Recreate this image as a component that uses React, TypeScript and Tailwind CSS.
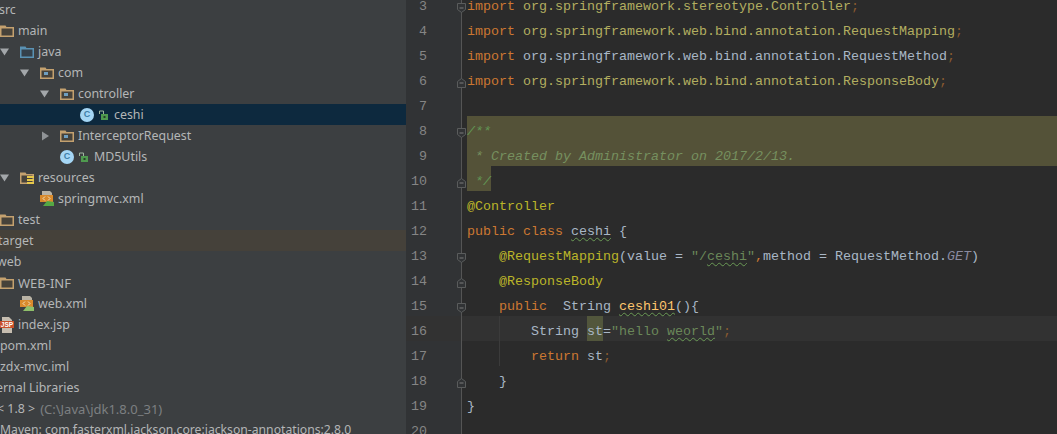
const Arrow = ({ open }: { open?: boolean }) => (
  <span className="flex h-full w-[20px] shrink-0 items-center">
    <svg width="10" height="10" viewBox="0 0 10 10" className={open ? "ml-0" : "ml-[1px]"}>
      {open ? <path d="M0 1.5h9L4.5 8.5z" fill="#a3a7aa" /> : <path d="M1 .5v9L8 5z" fill="#8f9396" />}
    </svg>
  </span>
);

const Folder = ({ kind = "plain" }: { kind?: "plain" | "source" | "package" | "resources" }) => {
  const edge = kind === "source" ? "#5a92b4" : "#c4a16f";
  return (
    <svg width="14" height="14" viewBox="0 0 14 14" className="shrink-0">
      <path d="M0 1.5h5.5l1 1.5H14v10H0z" fill={edge} />
      <rect x="1.5" y="4.5" width="11" height="7" fill={kind === "source" ? "#35404a" : "#46423a"} />
      {kind === "package" && <rect x="4" y="6" width="4" height="3" fill="#6f9fc0" />}
      {kind === "resources" && (
        <g fill="#e6c84a">
          <rect x="7" y="5" width="7" height="2" />
          <rect x="7" y="8" width="7" height="2" />
          <rect x="7" y="11" width="7" height="2" />
        </g>
      )}
    </svg>
  );
};

const ClassIcon = () => (
  <span className="flex h-[14px] w-[14px] shrink-0 items-center justify-center rounded-full bg-[#a5d6f5] font-['Liberation_Sans',sans-serif] text-[9px] font-bold leading-none text-[#3f7fa8]">
    C
  </span>
);

const Lock = () => (
  <svg width="10" height="12" viewBox="0 0 10 12" className="ml-[4px] shrink-0">
    <path d="M1.5 5V2h4v3" fill="none" stroke="#9fb5a0" strokeWidth="1" />
    <rect x="3" y="5" width="7" height="6" fill="#4f9a4f" />
    <rect x="5.5" y="7" width="2" height="2" fill="#27402a" />
  </svg>
);

const XmlIcon = ({ green }: { green?: boolean }) => (
  <svg width="14" height="15" viewBox="0 0 14 15" className="shrink-0">
    <path d="M2 0h8l2 2v8H2z" fill="#b9b3a5" />
    <rect x="0" y="4" width="13" height="7" fill="#d98a2c" />
    <path d="M3 7.5l2-2M3 7.5l2 2M10 7.5l-2-2M10 7.5l-2 2" stroke="#f4e2bd" strokeWidth="1" />
    <path d="M3 15l4-5 7 1v4z" fill={green ? "#55a845" : "#8fbf6a"} />
  </svg>
);

const JspIcon = () => (
  <svg width="14" height="16" viewBox="0 0 14 16" className="shrink-0">
    <path d="M2 0h7l3 3v13H2z" fill="#c6bdb0" />
    <rect x="0" y="4" width="14" height="7" fill="#c8502a" />
    <text x="7" y="10" textAnchor="middle" fontSize="6.5" fontWeight="700" fill="#fff" fontFamily="Liberation Sans, sans-serif">JSP</text>
  </svg>
);

const Row = ({ className, children }: { className: string; children: React.ReactNode }) => (
  <div className={`flex h-[21px] shrink-0 items-center whitespace-nowrap ${className}`}>{children}</div>
);

const Label = ({ children }: { children: React.ReactNode }) => <span className="ml-[4px] pt-[2px]">{children}</span>;

const Tree = () => (
  <div className="-mt-px flex w-[406px] shrink-0 flex-col overflow-hidden bg-[#3c3f41] font-['Noto_Sans',sans-serif] text-[12.4px] text-[#b4b6b7]">
    <Row className="-ml-[1px] pt-[2px]">src</Row>
    <Row className="pl-0"><Folder /><Label>main</Label></Row>
    <Row className="pl-0"><Arrow open /><Folder kind="source" /><Label>java</Label></Row>
    <Row className="pl-[20px]"><Arrow open /><Folder kind="package" /><Label>com</Label></Row>
    <Row className="pl-[40px]"><Arrow open /><Folder kind="package" /><Label>controller</Label></Row>
    <Row className="bg-[#0d293e] pl-[80px]"><ClassIcon /><Lock /><span className="ml-[6px] pt-[2px]">ceshi</span></Row>
    <Row className="pl-[40px]"><Arrow /><Folder kind="package" /><Label>InterceptorRequest</Label></Row>
    <Row className="pl-[60px]"><ClassIcon /><Lock /><span className="ml-[6px] pt-[2px]">MD5Utils</span></Row>
    <Row className="pl-0"><Arrow open /><Folder kind="resources" /><Label>resources</Label></Row>
    <Row className="pl-[40px]"><XmlIcon green /><Label>springmvc.xml</Label></Row>
    <Row className="pl-0"><Folder /><Label>test</Label></Row>
    <Row className="-ml-[2px] bg-[#45413a] pt-[2px]">target</Row>
    <Row className="-ml-[3px] pt-[2px]">web</Row>
    <Row className="pl-0 text-[13px]"><Folder /><Label>WEB-INF</Label></Row>
    <Row className="pl-[20px]"><XmlIcon /><Label>web.xml</Label></Row>
    <Row className="pl-0"><JspIcon /><Label>index.jsp</Label></Row>
    <Row className="pt-[2px]">pom.xml</Row>
    <Row className="pt-[2px]">zdx-mvc.iml</Row>
    <Row className="-ml-[22px] pt-[2px]">External Libraries</Row>
    <Row className="-ml-[3px] pt-[2px]">
      &lt; 1.8 &gt;<span className="ml-[5px] text-[13px] text-[#7d8082]">(C:\Java\jdk1.8.0_31)</span>
    </Row>
    <Row className="pt-[2px] text-[12.2px]">Maven: com.fasterxml.jackson.core:jackson-annotations:2.8.0</Row>
  </div>
);

const Fold = ({ end }: { end?: boolean }) => (
  <svg width="9" height="10" viewBox="0 0 9 10" className="absolute right-[-5px] top-[12px]">
    <path
      d={end ? "M.5 3.5L4.5.5l4 3v6h-8z" : "M.5.5h8v6l-4 3-4-3z"}
      fill="#313335"
      stroke="#5a5c5c"
    />
    <path d="M2.5 5h4" stroke="#7c7c7c" />
  </svg>
);

const Line = ({
  n,
  fold,
  active,
  guide,
  children,
}: {
  n: number;
  fold?: "open" | "end";
  active?: boolean;
  guide?: boolean;
  children?: React.ReactNode;
}) => (
  <div className={`flex h-[25px] shrink-0 whitespace-pre leading-[32px] ${active ? "bg-[#323232]" : ""}`}>
    <div
      className={`relative w-[56px] shrink-0 border-r border-[#555555] pr-[34px] text-right text-[#858585] ${
        active ? "" : "bg-[#313335]"
      }`}
    >
      {n}
      {fold && <Fold end={fold === "end"} />}
    </div>
    <div className="relative min-w-0 flex-1 pl-[5px]">
      {guide && <span className="absolute bottom-0 left-[37px] top-0 w-px bg-[#3b3b3b]" />}
      {children}
    </div>
  </div>
);

const Kw = ({ children }: { children: React.ReactNode }) => <span className="text-[#cc7832]">{children}</span>;
const Pkg = ({ children }: { children: React.ReactNode }) => <span className="text-[#b3ae60]">{children}</span>;
const Anno = ({ children }: { children: React.ReactNode }) => <span className="text-[#bbb529]">{children}</span>;
const Semi = () => <span className="text-[#8a5a30]">;</span>;
const Typo = ({ className, children }: { className: string; children: React.ReactNode }) => (
  <span className={`underline decoration-[#6a9a55] decoration-wavy decoration-1 underline-offset-2 ${className}`}>{children}</span>
);

const Editor = () => (
  <div className="-mt-[9px] flex min-w-0 flex-1 flex-col overflow-hidden bg-[#2b2b2b] font-['Liberation_Mono',monospace] text-[13.33px] text-[#a9b7c6]">
    <Line n={3} fold="open"><Kw>import</Kw> <Pkg>org.springframework.stereotype.Controller</Pkg><Semi /></Line>
    <Line n={4}><Kw>import</Kw> <Pkg>org.springframework.web.bind.annotation.RequestMapping</Pkg><Semi /></Line>
    <Line n={5}><Kw>import</Kw> org.springframework.web.bind.annotation.RequestMethod<Semi /></Line>
    <Line n={6} fold="end"><Kw>import</Kw> <Pkg>org.springframework.web.bind.annotation.ResponseBody</Pkg><Semi /></Line>
    <Line n={7} />
    <Line n={8} fold="open"><div className="h-full bg-[#545238] italic text-[#629755]">/**</div></Line>
    <Line n={9}><div className="h-full bg-[#545238] italic text-[#76905f]"> * Created by Administrator on 2017/2/13.</div></Line>
    <Line n={10} fold="end"><div className="h-full w-[24px] bg-[#545238] italic text-[#629755]"> */</div></Line>
    <Line n={11}><Anno>@Controller</Anno></Line>
    <Line n={12}><Kw>public class</Kw> <Typo className="text-[#a9b7c6]">ceshi</Typo> {"{"}</Line>
    <Line n={13} fold="open">
      {"    "}<Anno>@RequestMapping</Anno>(value = <span className="text-[#6a8759]">"/<Typo className="">ceshi</Typo>"</span><Kw>,</Kw>method = RequestMethod.<span className="italic text-[#8a8aa0]">GET</span>)
    </Line>
    <Line n={14} fold="end">{"    "}<Anno>@ResponseBody</Anno></Line>
    <Line n={15} fold="open">{"    "}<Kw>public</Kw>  String <Typo className="text-[#ffc66d]">ceshi01</Typo>(){"{"}</Line>
    <Line n={16} active guide>
      {"        "}String <span className="inline-block h-[25px] bg-[#52563c]">st</span>=<span className="text-[#6a8759]">"hello <Typo className="">weorld</Typo>"</span><Semi />
    </Line>
    <Line n={17} guide>{"        "}<Kw>return</Kw> st<Semi /></Line>
    <Line n={18} fold="end">{"    "}{"}"}</Line>
    <Line n={19}>{"}"}</Line>
    <Line n={20} />
  </div>
);

export default function App() {
  return (
    <div className="flex h-[434px] w-full overflow-hidden bg-[#2b2b2b]">
      <Tree />
      <Editor />
    </div>
  );
}
